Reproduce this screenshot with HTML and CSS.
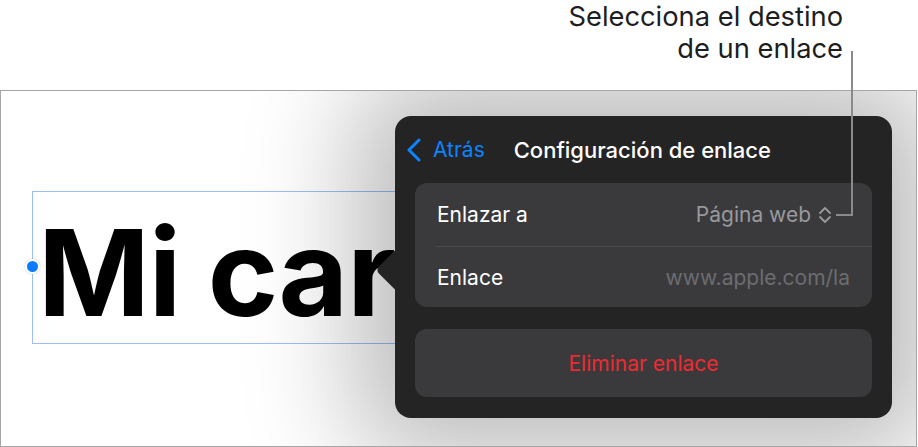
FILE: index.html
```html
<html>
<head>
  <meta charset="UTF-8" />
  <title>Configuración de enlace</title>
  <link rel="stylesheet" href="styles.css">
</head>
<body>
  <div class="callout">
    <p>Selecciona el destino<br>de un enlace</p>
  </div>
  <div class="leader"></div>

  <div class="screen">
    <div class="textbox">
      <span class="handle"></span>
      <div class="big-title">Mi car</div>
    </div>

    <div class="popover">
      <div class="notch"></div>
      <div class="pop-header">
        <button class="back-btn">
          <svg width="14" height="24" viewBox="0 0 14 24"><polyline points="12,2 2,12 12,22" fill="none" stroke="#0a84ff" stroke-width="3" stroke-linecap="round" stroke-linejoin="round"/></svg>
          <span>Atrás</span>
        </button>
        <span class="pop-title">Configuración de enlace</span>
      </div>

      <div class="group">
        <div class="row row-first">
          <span class="row-label">Enlazar a</span>
          <span class="row-value">Página web
            <svg width="14" height="18" viewBox="0 0 14 18"><polyline points="2,7 7,2 12,7" fill="none" stroke="#98989d" stroke-width="1.8" stroke-linecap="round" stroke-linejoin="round"/><polyline points="2,11 7,16 12,11" fill="none" stroke="#98989d" stroke-width="1.8" stroke-linecap="round" stroke-linejoin="round"/></svg>
          </span>
        </div>
        <div class="row">
          <span class="row-label">Enlace</span>
          <span class="row-placeholder">www.apple.com/la</span>
        </div>
      </div>

      <button class="btn-delete">Eliminar enlace</button>
    </div>
  </div>
</body>
</html>
```

FILE: styles.css
```css
body {
  margin: 0;
  width: 918px;
  height: 447px;
  background: #fff;
  font-family: Inter, 'Noto Sans', sans-serif;
  position: relative;
  overflow: hidden;
}

.callout {
  height: 90px;
  display: flex;
  justify-content: flex-end;
  padding-right: 75px;
}

.callout p {
  margin: 0;
  padding-top: 1px;
  text-align: right;
  font-size: 27.3px;
  line-height: 32px;
  color: #1d1d1f;
}

.leader {
  position: absolute;
  left: 836px;
  top: 51px;
  width: 15px;
  height: 163px;
  border-right: 2px solid #8a8a8a;
  border-bottom: 2px solid #8a8a8a;
  z-index: 5;
}

.screen {
  position: relative;
  width: 884px;
  height: 255px;
  border: 1px solid #a6a6a6;
  overflow: hidden;
  background: #fff;
  padding: 100px 0 0 31px;
}

.textbox {
  position: relative;
  width: 440px;
  height: 151px;
  border: 1px solid #9cbff5;
}

.handle {
  position: absolute;
  left: -8px;
  top: 67px;
  width: 11px;
  height: 11px;
  border-radius: 50%;
  background: #0a7aff;
  border: 2px solid #fff;
  box-shadow: 0 0 2px rgba(0,0,0,0.25);
}

.big-title {
  padding: 20px 0 0 5px;
  font-family: Inter, 'Liberation Sans', sans-serif;
  font-weight: 700;
  font-size: 120px;
  line-height: 121px;
  color: #000;
  white-space: nowrap;
  letter-spacing: -1px;
}

.popover {
  position: absolute;
  left: 394px;
  top: 25px;
  width: 497px;
  height: 302px;
  background: #242424;
  border-radius: 16px;
  box-shadow: 0 0 110px 40px rgba(0,0,0,0.27);
  color: #fff;
  display: flex;
  flex-direction: column;
  padding: 0 20px 21px;
  box-sizing: border-box;
}

.notch {
  position: absolute;
  left: -13px;
  top: 138px;
  width: 32px;
  height: 32px;
  background: #242424;
  border-radius: 5px;
  transform: rotate(45deg);
}

.pop-header {
  position: relative;
  height: 67px;
  display: flex;
  align-items: center;
  gap: 29px;
  margin-left: -8px;
}

.back-btn {
  display: flex;
  align-items: center;
  gap: 12px;
  background: none;
  border: none;
  padding: 0;
  color: #0a84ff;
  font-family: inherit;
  font-size: 21px;
}

.pop-title {
  font-size: 22px;
  font-weight: 500;
  color: #fff;
}

.group {
  position: relative;
  background: #3a3a3c;
  border-radius: 12px;
  height: 124px;
  display: flex;
  flex-direction: column;
}

.row {
  flex: 1;
  display: flex;
  align-items: center;
  justify-content: space-between;
  padding: 0 22px;
  font-size: 21px;
}

.row-first {
  flex: 0 0 64px;
  box-sizing: border-box;
  padding-right: 40px;
  border-bottom: 1px solid #4a4a4d;
  margin-left: 21px;
  padding-left: 1px;
}

.row-label {
  color: #fff;
}

.row-value {
  display: flex;
  align-items: center;
  gap: 7px;
  color: #98989d;
}

.row-placeholder {
  color: #6c6c70;
}

.btn-delete {
  margin-top: 22px;
  height: 68px;
  background: #3a3a3c;
  border: none;
  border-radius: 12px;
  color: #ee2a30;
  font-family: inherit;
  font-size: 21px;
}
```
